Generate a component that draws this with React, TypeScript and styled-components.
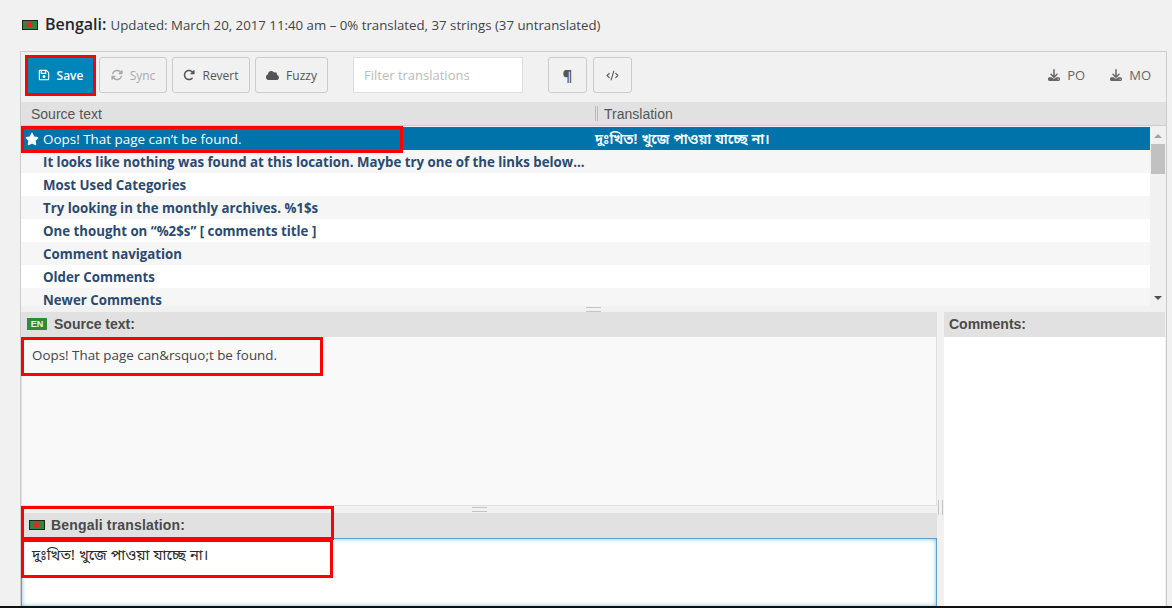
import React from "react";
import styled, { createGlobalStyle } from "styled-components";
import { FaCloud, FaDownload, FaRegFloppyDisk, FaRotate, FaRotateRight, FaStar } from "react-icons/fa6";
import { CodeXml } from "lucide-react";

const GlobalStyle = createGlobalStyle`
  html, body {
    margin: 0;
    padding: 0;
    height: 608px;
    overflow: hidden;
    background: #f1f1f1;
  }
  * {
    box-sizing: border-box;
  }
`;

const Page = styled.div`
  position: relative;
  width: 1172px;
  height: 608px;
  display: flex;
  flex-direction: column;
  color: #444;
  font-family: "Open Sans", sans-serif;
`;

const Heading = styled.h1`
  margin: 0;
  height: 51px;
  padding: 0 0 3px 22px;
  display: flex;
  align-items: center;
  gap: 7px;
  font-size: 16px;
  font-weight: 600;
  color: #23282d;

  span {
    font-size: 13.25px;
    font-weight: 400;
    color: #444;
  }

  svg {
    margin-top: 2px;
  }
`;

const Editor = styled.div`
  margin: 0 5px 0 20px;
  flex: 1;
  min-height: 0;
  display: flex;
  flex-direction: column;
  border: 1px solid #ccc;
  border-bottom: 0;
`;

const Toolbar = styled.div`
  height: 50px;
  flex: none;
  display: flex;
  align-items: center;
  padding: 0 15px 4px 6px;
  background: #f1f1f1;
`;

const ToolButton = styled.button<{ $width: number; $gap?: number; $disabled?: boolean }>`
  width: ${({ $width }) => $width}px;
  height: 36px;
  margin-right: ${({ $gap }) => $gap ?? 5}px;
  padding: 0;
  display: flex;
  align-items: center;
  justify-content: center;
  gap: 7px;
  border: 1px solid #ccc;
  border-radius: 3px;
  background: #f1f1f1;
  font: 400 12px "Open Sans", sans-serif;
  color: ${({ $disabled }) => ($disabled ? "#aaa" : "#555")};
`;

const SaveButton = styled(ToolButton)`
  background: #0085ba;
  border-color: #0085ba;
  color: #fff;
  font-weight: 600;
  border-radius: 0;
`;

const GlyphButton = styled(ToolButton)`
  font-size: 15px;
  font-weight: 700;
`;

const FilterBox = styled.div`
  width: 170px;
  height: 36px;
  margin: 0 25px;
  padding: 0 10px;
  display: flex;
  align-items: center;
  background: #fff;
  border: 1px solid #ddd;
  font-size: 13px;
  color: #bbb;
`;

const Downloads = styled.div`
  margin-left: auto;
  display: flex;
  gap: 25px;
`;

const DownloadLink = styled.span`
  display: flex;
  align-items: center;
  gap: 7px;
  font-size: 13px;
  color: #666;
`;

const ColumnHeader = styled.div`
  height: 24px;
  flex: none;
  display: flex;
  align-items: center;
  background: #e1e1e1;
  border-bottom: 1px solid #ccc;
  font: 14px "Liberation Sans", Arial, sans-serif;
  color: #555;
`;

const ColumnTitle = styled.div<{ $width?: number; $inset?: number }>`
  width: ${({ $width }) => ($width ? `${$width}px` : "auto")};
  padding-left: ${({ $inset }) => $inset ?? 10}px;
`;

const ColumnRule = styled.div`
  width: 3px;
  height: 15px;
  margin-left: -2px;
  margin-right: -1px;
  border-left: 1px solid #bbb;
  border-right: 1px solid #bbb;
`;

const ListWrap = styled.div`
  height: 179px;
  flex: none;
  margin-top: 1px;
  display: flex;
  background: #fff;
`;

const Rows = styled.div`
  flex: 1;
  min-width: 0;
  overflow: hidden;
`;

const Row = styled.div<{ $selected?: boolean }>`
  height: 23px;
  display: flex;
  align-items: center;
  font-size: ${({ $selected }) => ($selected ? 13.45 : 13.27)}px;
  font-weight: ${({ $selected }) => ($selected ? 400 : 700)};
  color: ${({ $selected }) => ($selected ? "#fff" : "#2b4a70")};
  background: ${({ $selected }) => ($selected ? "#0073aa" : "#fff")};

  &:nth-child(even) {
    background: #f6f6f6;
  }
`;

const RowIcon = styled.div`
  width: 22px;
  flex: none;
  display: flex;
  justify-content: center;
`;

const RowSource = styled.div`
  width: 552px;
  flex: none;
  white-space: nowrap;
`;

const RowTarget = styled.div`
  font-family: "Noto Sans Bengali", "Noto Sans", "Lohit Bengali", sans-serif;
  font-size: 14.3px;
  font-weight: 600;
  padding-top: 3px;
`;

const Scrollbar = styled.div`
  width: 16px;
  flex: none;
  display: flex;
  flex-direction: column;
  align-items: center;
  justify-content: space-between;
  background: #f1f1f1;
`;

const ScrollArrow = styled.div<{ $down?: boolean }>`
  height: 17px;
  display: flex;
  align-items: center;
  &::before {
    content: "";
    border-left: 4px solid transparent;
    border-right: 4px solid transparent;
    ${({ $down }) =>
      $down ? "border-top: 4px solid #505050;" : "border-bottom: 4px solid #a3a3a3;"}
  }
`;

const ScrollThumb = styled.div`
  width: 14px;
  height: 30px;
  background: #c1c1c1;
  margin-bottom: auto;
`;

const SplitH = styled.div<{ $height?: number }>`
  height: ${({ $height }) => $height ?? 6}px;
  flex: none;
  display: flex;
  align-items: center;
  justify-content: center;

  &::before {
    content: "";
    width: 15px;
    height: 3px;
    border-top: 1px solid #c4c4c4;
    border-bottom: 1px solid #c4c4c4;
  }
`;

const Lower = styled.div`
  flex: 1;
  min-height: 0;
  display: flex;
`;

const LeftPane = styled.div`
  width: 916px;
  flex: none;
  display: flex;
  flex-direction: column;
`;

const SplitV = styled.div`
  width: 7px;
  flex: none;
  display: flex;
  justify-content: center;
  padding-top: 188px;

  &::before {
    content: "";
    width: 3px;
    height: 15px;
    border-left: 1px solid #c4c4c4;
    border-right: 1px solid #c4c4c4;
  }
`;

const RightPane = styled.div`
  flex: 1;
  display: flex;
  flex-direction: column;
  margin-right: 1px;
`;

const PaneHeader = styled.div<{ $inset: number; $gap?: number }>`
  height: 25px;
  flex: none;
  display: flex;
  align-items: center;
  gap: ${({ $gap }) => $gap ?? 7}px;
  padding: 0 0 1px ${({ $inset }) => $inset}px;
  background: #e1e1e1;
  font: 700 14px "Liberation Sans", Arial, sans-serif;
  color: #4a4a4a;
`;

const WideLabel = styled.span`
  letter-spacing: 0.17px;
`;

const LangBadge = styled.span`
  width: 20px;
  height: 12px;
  display: flex;
  align-items: center;
  justify-content: center;
  background: #2e8b36;
  color: #e8f5e8;
  font-size: 9px;
  font-weight: 700;
`;

const SourceBody = styled.div`
  height: 169px;
  flex: none;
  padding: 9px 10px;
  background: #f9f9f9;
  border: 1px solid #e1e1e1;
  border-top: 0;
  font-size: 13.4px;
  line-height: 18px;
  color: #444;
`;

const TargetBody = styled.div`
  flex: 1;
  padding: 7px 10px;
  background: #fff;
  border: 1px solid #5b9dd9;
  border-bottom: 0;
  box-shadow: inset 0 0 4px rgba(30, 140, 190, 0.6);
  font-family: "Noto Sans Bengali", "Noto Sans", "Lohit Bengali", sans-serif;
  font-size: 14.8px;
  line-height: 20px;
  color: #2a2a2a;
`;

const CommentBody = styled.div`
  flex: 1;
  background: #fff;
`;

const BottomEdge = styled.div`
  height: 2px;
  flex: none;
  background: #111;
`;

const Mark = styled.div<{ $x: number; $y: number; $w: number; $h: number }>`
  position: absolute;
  left: ${({ $x }) => $x}px;
  top: ${({ $y }) => $y}px;
  width: ${({ $w }) => $w}px;
  height: ${({ $h }) => $h}px;
  border: 3px solid #f00;
  pointer-events: none;
`;

const Flag = () => (
  <svg width="16" height="10" viewBox="0 0 16 10">
    <rect x="0.5" y="0.5" width="15" height="9" fill="#2a8a3c" stroke="#222" />
    <circle cx="7.5" cy="5" r="3" fill="#e8262a" />
  </svg>
);

const rows = [
  "Oops! That page can’t be found.",
  "It looks like nothing was found at this location. Maybe try one of the links below...",
  "Most Used Categories",
  "Try looking in the monthly archives. %1$s",
  "One thought on “%2$s” [ comments title ]",
  "Comment navigation",
  "Older Comments",
  "Newer Comments",
];

const bengali = "দুঃখিত! খুজে পাওয়া যাচ্ছে না।";

const App = () => {
  return (
    <Page>
      <GlobalStyle />
      <Heading>
        <Flag />
        <div>
          Bengali: <span>Updated: March 20, 2017 11:40 am – 0% translated, 37 strings (37 untranslated)</span>
        </div>
      </Heading>
      <Editor>
        <Toolbar>
          <SaveButton $width={67} $gap={5}>
            <FaRegFloppyDisk size={12} /> Save
          </SaveButton>
          <ToolButton $width={68} $disabled>
            <FaRotate size={12} /> Sync
          </ToolButton>
          <ToolButton $width={78}>
            <FaRotateRight size={12} /> Revert
          </ToolButton>
          <ToolButton $width={73} $gap={0}>
            <FaCloud size={13} /> Fuzzy
          </ToolButton>
          <FilterBox>Filter translations</FilterBox>
          <GlyphButton $width={39} $gap={6}>
            ¶
          </GlyphButton>
          <ToolButton $width={39} $gap={0}>
            <CodeXml size={13} />
          </ToolButton>
          <Downloads>
            <DownloadLink>
              <FaDownload size={12} /> PO
            </DownloadLink>
            <DownloadLink>
              <FaDownload size={12} /> MO
            </DownloadLink>
          </Downloads>
        </Toolbar>
        <ColumnHeader>
          <ColumnTitle $width={576}>Source text</ColumnTitle>
          <ColumnRule />
          <ColumnTitle $inset={7}>Translation</ColumnTitle>
        </ColumnHeader>
        <ListWrap>
          <Rows>
            {rows.map((text, i) => (
              <Row key={text} $selected={i === 0}>
                <RowIcon>{i === 0 && <FaStar size={14} color="#fff" />}</RowIcon>
                <RowSource>{text}</RowSource>
                {i === 0 && <RowTarget>{bengali}</RowTarget>}
              </Row>
            ))}
          </Rows>
          <Scrollbar>
            <ScrollArrow />
            <ScrollThumb />
            <ScrollArrow $down />
          </Scrollbar>
        </ListWrap>
        <SplitH />
        <Lower>
          <LeftPane>
            <PaneHeader $inset={6}>
              <LangBadge>EN</LangBadge> Source text:
            </PaneHeader>
            <SourceBody>Oops! That page can&amp;rsquo;t be found.</SourceBody>
            <SplitH $height={7} />
            <PaneHeader $inset={8} $gap={6}>
              <Flag /> <WideLabel>Bengali translation:</WideLabel>
            </PaneHeader>
            <TargetBody>{bengali}</TargetBody>
          </LeftPane>
          <SplitV />
          <RightPane>
            <PaneHeader $inset={5}>Comments:</PaneHeader>
            <CommentBody />
          </RightPane>
        </Lower>
      </Editor>
      <BottomEdge />
      <Mark $x={25} $y={55} $w={71} $h={41} />
      <Mark $x={21} $y={126} $w={382} $h={27} />
      <Mark $x={21} $y={337} $w={302} $h={39} />
      <Mark $x={21} $y={506} $w={313} $h={34} />
      <Mark $x={21} $y={539} $w={312} $h={39} />
    </Page>
  );
};

export default App;
